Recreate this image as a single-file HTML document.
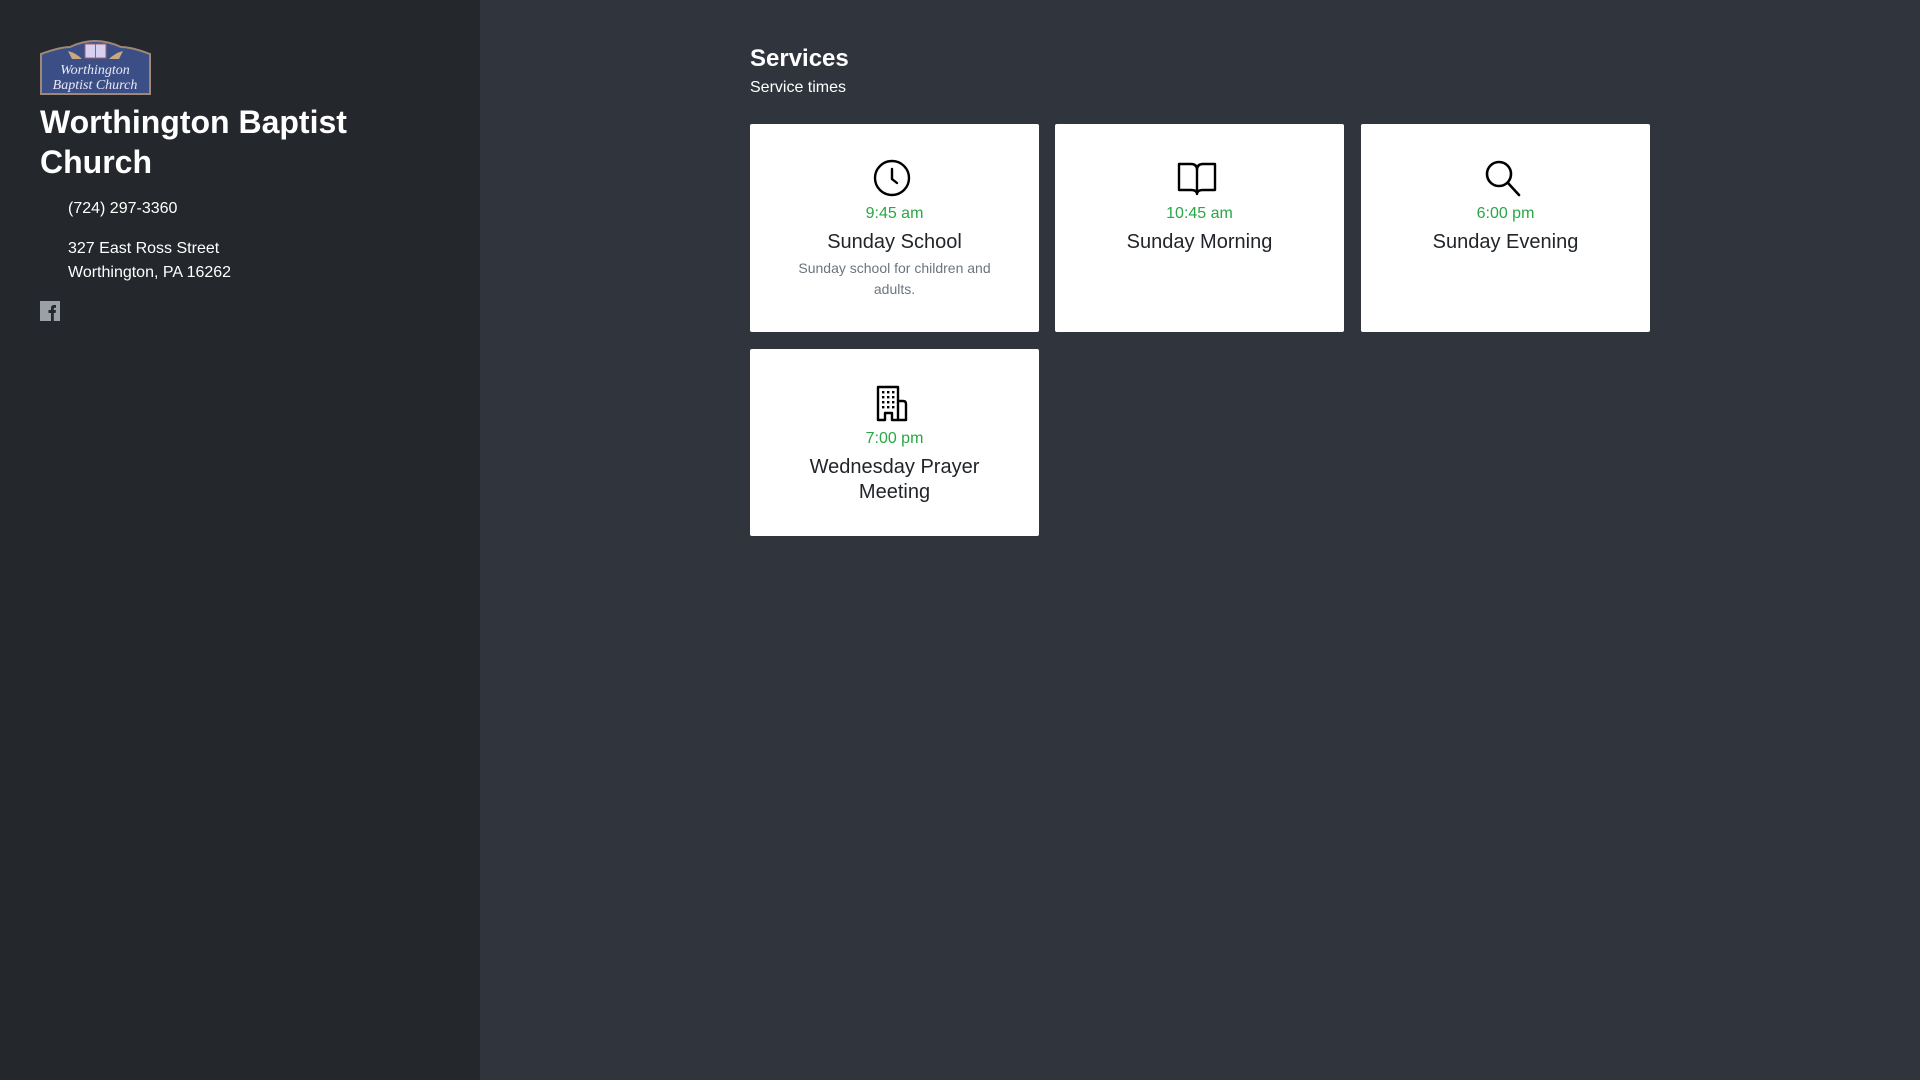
<!DOCTYPE html>
<html><head><meta charset="utf-8"><style>
*{box-sizing:border-box;margin:0;padding:0}
body{width:1920px;height:1080px;background:#30353d;font-family:"Liberation Sans",Arial,sans-serif;position:relative;overflow:hidden}
.side{position:absolute;left:0;top:0;width:480px;height:1080px;background:#24272b;color:#fff}
.logo{position:absolute;left:40px;top:39px}
.title{position:absolute;left:40px;top:102px;font-size:32px;font-weight:bold;line-height:40px;width:400px}
.info{position:absolute;left:68px;font-size:16px;line-height:24px}
.fb{position:absolute;left:40px;top:301px}
.h{position:absolute;left:750px;top:45px;color:#fff;font-size:24px;font-weight:bold}
.st{position:absolute;left:750px;top:79px;color:#fff;font-size:16px}
.card{position:absolute;background:#fff;width:289px;border-radius:2px;text-align:center;padding-top:35px}
.card svg{display:block;margin:0 auto 0 auto;position:relative;left:-3px}
.t{color:#28a745;font-size:16px;line-height:24px;margin-top:5px}
.n{color:#212529;font-size:20px;line-height:25px;margin-top:4px;padding:0 30px}
.d{color:#6c757d;font-size:14px;line-height:21px;margin-top:3px;padding:0 40px}
</style></head><body>
<div class="side">
<svg class="logo" width="111" height="56" viewBox="0 0 111 56">
<path d="M1 15 Q20 8 30 8 Q55 -4 81 8 Q92 8 110 15 L110 55 L1 55 Z" fill="#3b4f86" stroke="#a08878" stroke-width="2"/>
<rect x="45" y="5" width="21" height="14" fill="#d8d0f0" stroke="#a06070"/>
<line x1="55.5" y1="5" x2="55.5" y2="19" stroke="#a06070"/>
<path d="M28 12 Q36 14 42 20 L32 20 Z M83 12 Q75 14 69 20 L79 20 Z" fill="#c8a880"/>
<text x="55" y="35" text-anchor="middle" font-family="Liberation Serif" font-style="italic" font-size="14" fill="#e8e8f8">Worthington</text>
<text x="55" y="50" text-anchor="middle" font-family="Liberation Serif" font-style="italic" font-size="14" fill="#e8e8f8">Baptist Church</text>
</svg>
<div class="title">Worthington Baptist Church</div>
<div class="info" style="top:197px">(724) 297-3360</div>
<div class="info" style="top:237px">327 East Ross Street<br>Worthington, PA 16262</div>
<svg class="fb" width="20" height="20" viewBox="0 0 20 20"><rect width="20" height="20" fill="#9aa0a6"/><path d="M11 20 V12 H8.5 V9 H11 V7 Q11 4 14 4 H16 V6.8 H14.5 Q13.8 6.8 13.8 7.6 V9 H16 L15.6 12 H13.8 V20 Z" fill="#24272b"/></svg>
</div>
<div class="h">Services</div>
<div class="st">Service times</div>

<div class="card" style="left:750px;top:124px;height:208px">
<svg width="38" height="38" viewBox="0 0 38 38" fill="none" stroke="#000" stroke-width="2.4" stroke-linecap="round"><circle cx="19" cy="19" r="17"/><path d="M19 10 V20 L24 24"/></svg>
<div class="t">9:45 am</div><div class="n">Sunday School</div><div class="d">Sunday school for children and adults.</div></div>

<div class="card" style="left:1055px;top:124px;height:208px">
<svg width="42" height="38" viewBox="0 0 42 38" fill="none" stroke="#000" stroke-width="2.4" stroke-linejoin="round"><path d="M3 5 H15 Q21 5 21 11 V35 Q21 31 15 31 H3 Z M39 5 H27 Q21 5 21 11 V35 Q21 31 27 31 H39 Z"/></svg>
<div class="t">10:45 am</div><div class="n">Sunday Morning</div></div>

<div class="card" style="left:1361px;top:124px;height:208px">
<svg width="38" height="38" viewBox="0 0 38 38" fill="none" stroke="#000" stroke-width="2.6" stroke-linecap="round"><circle cx="15" cy="15" r="12"/><path d="M24 24 L35 36"/></svg>
<div class="t">6:00 pm</div><div class="n">Sunday Evening</div></div>

<div class="card" style="left:750px;top:349px;height:187px">
<svg width="38" height="38" viewBox="0 0 38 38" fill="none" stroke="#000" stroke-width="2.4" stroke-linejoin="round"><path d="M5 36 V3 H25 V36 H19 V29 H12 V36 Z M25 17 H30 Q33 17 33 20 V36 H25"/><g fill="#000" stroke="none"><rect x="9" y="7" width="2.4" height="2.4"/><rect x="14" y="7" width="2.4" height="2.4"/><rect x="19" y="7" width="2.4" height="2.4"/><rect x="9" y="12" width="2.4" height="2.4"/><rect x="14" y="12" width="2.4" height="2.4"/><rect x="19" y="12" width="2.4" height="2.4"/><rect x="9" y="17" width="2.4" height="2.4"/><rect x="14" y="17" width="2.4" height="2.4"/><rect x="19" y="17" width="2.4" height="2.4"/><rect x="9" y="22" width="2.4" height="2.4"/><rect x="14" y="22" width="2.4" height="2.4"/><rect x="19" y="22" width="2.4" height="2.4"/></g></svg>
<div class="t">7:00 pm</div><div class="n">Wednesday Prayer Meeting</div></div>
</body></html>
